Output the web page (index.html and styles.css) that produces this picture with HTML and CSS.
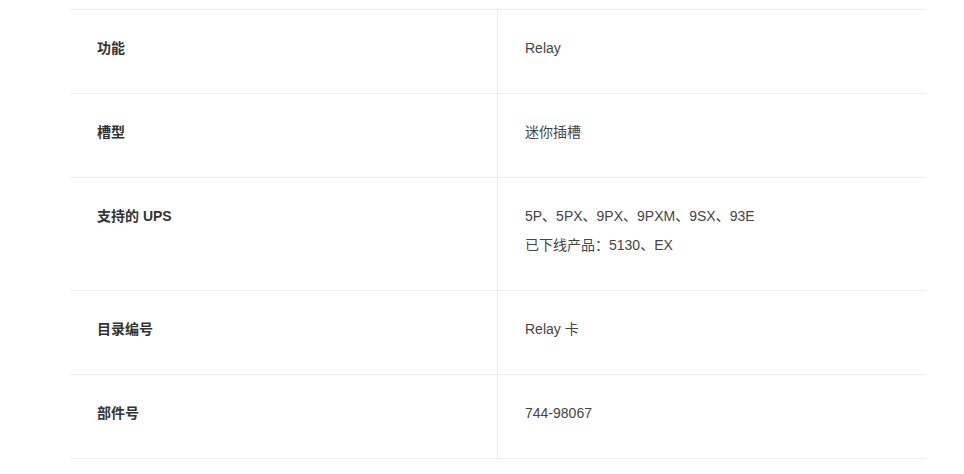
FILE: index.html
```html
<!DOCTYPE html>
<html lang="zh-CN">
<head>
<meta charset="utf-8">
<title>Relay 卡</title>
<link rel="stylesheet" href="styles.css">
</head>
<body>
<div class="spec">
  <div class="row">
    <div class="label"><p>功能</p></div>
    <div class="value"><p>Relay</p></div>
  </div>
  <div class="row">
    <div class="label"><p>槽型</p></div>
    <div class="value"><p>迷你插槽</p></div>
  </div>
  <div class="row">
    <div class="label"><p>支持的 UPS</p></div>
    <div class="value"><p>5P、5PX、9PX、9PXM、9SX、93E</p><p>已下线产品：5130、EX</p></div>
  </div>
  <div class="row">
    <div class="label"><p>目录编号</p></div>
    <div class="value"><p>Relay 卡</p></div>
  </div>
  <div class="row">
    <div class="label"><p>部件号</p></div>
    <div class="value"><p>744-98067</p></div>
  </div>
</div>
</body>
</html>
```
FILE: styles.css
```css
html, body {
  margin: 0;
  padding: 0;
  background: #fff;
}
body {
  font-family: "Liberation Sans", Arial, "Noto Sans CJK SC", sans-serif;
  font-size: 14px;
  color: #333;
}
.spec {
  width: 856px;
  margin: 9px 0 0 70px;
  border-top: 1px solid #ececec;
}
.row {
  display: grid;
  grid-template-columns: 427px 429px;
  border-bottom: 1px solid #ececec;
}
.label, .value {
  padding: 27px 27px 27px;
}
.value {
  border-left: 1px solid #ececec;
  color: #444;
}
.label {
  font-weight: bold;
  color: #333;
}
p {
  margin: 0 0 7px;
  line-height: 22px;
}
```
